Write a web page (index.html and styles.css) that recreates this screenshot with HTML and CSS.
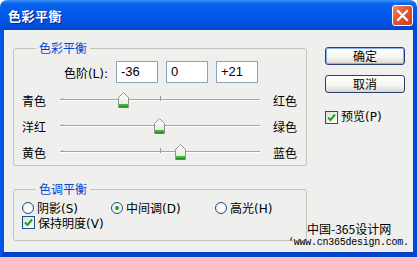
FILE: index.html
```html
<!doctype html>
<html lang="zh-cn">
	<head>
		<meta charset="utf-8">
		<title>色彩平衡</title>
		<link rel="stylesheet" href="styles.css">
	</head>
	<body>
		<div class="window">
			<div class="titlebar">
				<span class="title">色彩平衡</span>
				<span class="close">
					<svg width="13" height="13" viewBox="0 0 13 13"><path d="M2 2 L11 11 M11 2 L2 11" stroke="#fff" stroke-width="2.2" stroke-linecap="square"/></svg>
				</span>
			</div>

			<div class="frame">
				<div class="main">
					<fieldset class="group balance">
						<legend>色彩平衡</legend>
						<div class="levels">
							<span class="levels-label">色阶(L):</span>
							<span class="field">-36</span>
							<span class="field">0</span>
							<span class="field">+21</span>
						</div>

						<div class="sliders">
							<div class="slider-row">
								<span class="from">青色</span>
								<div class="track">
									<span class="tick start"></span>
									<span class="tick mid"></span>
									<svg class="thumb" style="left: 58px" width="11" height="16" viewBox="0 0 11 16"><use href="#thumb"/></svg>
								</div>
								<span class="to">红色</span>
							</div>
							<div class="slider-row">
								<span class="from">洋红</span>
								<div class="track">
									<span class="tick start"></span>
									<span class="tick mid"></span>
									<svg class="thumb" style="left: 94px" width="11" height="16" viewBox="0 0 11 16"><use href="#thumb"/></svg>
								</div>
								<span class="to">绿色</span>
							</div>
							<div class="slider-row">
								<span class="from">黄色</span>
								<div class="track">
									<span class="tick start"></span>
									<span class="tick mid"></span>
									<svg class="thumb" style="left: 115px" width="11" height="16" viewBox="0 0 11 16"><use href="#thumb"/></svg>
								</div>
								<span class="to">蓝色</span>
							</div>
						</div>
					</fieldset>

					<fieldset class="group tone">
						<legend>色调平衡</legend>
						<div class="tone-grid">
							<label class="option"><span class="radio"></span>阴影(S)</label>
							<label class="option"><span class="radio on"></span>中间调(D)</label>
							<label class="option"><span class="radio"></span>高光(H)</label>
							<label class="option keep"><span class="check"><svg width="9" height="9" viewBox="0 0 9 9"><path d="M1 4.5 L3.5 7 L8 1.5" fill="none" stroke="#21a121" stroke-width="2"/></svg></span>保持明度(V)</label>
						</div>
					</fieldset>
				</div>

				<div class="side">
					<span class="button default">确定</span>
					<span class="button">取消</span>
					<label class="option preview"><span class="check"><svg width="9" height="9" viewBox="0 0 9 9"><path d="M1 4.5 L3.5 7 L8 1.5" fill="none" stroke="#21a121" stroke-width="2"/></svg></span>预览(P)</label>
				</div>
			</div>

			<div class="watermark">
				<div class="wm-name">中国-365设计网</div>
				<div class="wm-url">‘www.cn365design.com.</div>
			</div>
		</div>

		<svg width="0" height="0" class="defs">
			<defs>
				<linearGradient id="thumbfill" x1="0" y1="0" x2="0" y2="1">
					<stop offset="0" stop-color="#ffffff"/>
					<stop offset="1" stop-color="#e4e4dc"/>
				</linearGradient>
				<g id="thumb">
					<path d="M0.5 5.5 L5.5 0.5 L10.5 5.5 L10.5 15.5 L0.5 15.5 Z" fill="url(#thumbfill)" stroke="#8c9a8c"/>
					<rect x="1" y="12" width="9" height="2" fill="#3cba3c"/>
					<rect x="1" y="14" width="9" height="1.5" fill="#1f8a1f"/>
				</g>
			</defs>
		</svg>
	</body>
</html>
```

FILE: styles.css
```css
body {
	margin: 0;
	font-family: "DejaVu Sans", "Noto Sans CJK SC", sans-serif;
	font-size: 12px;
	color: #000;
}

.defs { position: absolute; }

.window {
	position: relative;
	width: 417px;
	height: 257px;
	display: flex;
	flex-direction: column;
	overflow: hidden;
}

/* title bar */
.titlebar {
	height: 30px;
	flex: none;
	display: flex;
	align-items: center;
	justify-content: space-between;
	padding: 0 4px 0 8px;
	border-radius: 7px 7px 0 0;
	background: linear-gradient(to bottom, #3d95ff 0%, #0a63ea 12%, #0058ee 45%, #0055e5 70%, #0047d0 100%);
	box-sizing: border-box;
}

.title {
	color: #fff;
	font-family: "Noto Sans CJK SC", sans-serif;
	font-weight: bold;
	font-size: 13px;
	letter-spacing: 0.5px;
	text-shadow: 1px 1px #0a1e8a;
}

.close {
	width: 19px;
	height: 19px;
	border: 1px solid #fff;
	border-radius: 3px;
	background: linear-gradient(135deg, #f08a6a 0%, #e2552f 45%, #c7411d 100%);
	display: flex;
	align-items: center;
	justify-content: center;
}

/* dialog body */
.frame {
	flex: 1;
	display: flex;
	background: #efefed;
	border-left: 4px solid #0055e5;
	border-right: 4px solid #0048d8;
	border-bottom: 5px solid #0043c8;
}

.main {
	width: 294px;
	padding: 10px 0 0 9px;
}

.group {
	margin: 0;
	padding: 0 0 0 8px;
	border: 1px solid #c4c4bc;
	border-radius: 3px;
	min-width: 0;
	box-sizing: border-box;
}

.group legend {
	margin-left: 14px;
	padding: 0 3px;
	line-height: 16px;
	color: #0046d5;
	font-family: "Noto Sans CJK SC", sans-serif;
	font-size: 12px;
}

.balance { height: 126px; }

.levels {
	display: flex;
	align-items: center;
	gap: 8px;
	margin-top: 5px;
	height: 22px;
}

.levels-label {
	width: 86px;
	text-align: right;
}

.field {
	width: 42px;
	height: 22px;
	box-sizing: border-box;
	border: 1px solid #8ea4bb;
	background: #fff;
	padding: 0 4px;
	font-family: "Liberation Sans", sans-serif;
	font-size: 13px;
	line-height: 20px;
}

.sliders { margin-top: 4px; }

.slider-row {
	display: flex;
	align-items: center;
	height: 26px;
}

.from { width: 38px; }
.to { margin-left: 13px; }

.track {
	position: relative;
	width: 200px;
	height: 0;
	border-top: 1px solid #a6a69e;
	border-bottom: 1px solid #fff;
}

.tick {
	position: absolute;
	width: 1px;
	background: #9a9a92;
}
.tick.start { left: 2px; top: -2px; height: 2px; }
.tick.mid { left: 100px; top: -4px; height: 5px; }

.thumb {
	position: absolute;
	top: -8px;
	display: block;
}

.tone {
	margin-top: 15px;
	height: 60px;
}

.tone-grid {
	display: grid;
	grid-template-columns: 89px 104px auto;
	grid-auto-rows: 15px;
	margin-top: 3px;
}

.option {
	display: flex;
	align-items: center;
	gap: 3px;
	white-space: nowrap;
}

.keep { grid-column: 1 / 4; }

.radio {
	width: 10px;
	height: 10px;
	border: 1px solid #1c5180;
	border-radius: 50%;
	background: radial-gradient(circle at 60% 60%, #fff 0%, #ecebe6 100%);
	display: flex;
	align-items: center;
	justify-content: center;
	flex: none;
}

.radio.on::after {
	content: "";
	width: 4px;
	height: 4px;
	border-radius: 50%;
	background: #21a121;
}

.check {
	width: 11px;
	height: 11px;
	border: 1px solid #1c5180;
	background: linear-gradient(135deg, #e0e0da, #fff);
	display: flex;
	align-items: center;
	justify-content: center;
	flex: none;
}

/* buttons column */
.side {
	display: flex;
	flex-direction: column;
	padding: 17px 0 0 18px;
}

.button {
	width: 80px;
	height: 18px;
	box-sizing: border-box;
	border: 1px solid #2b3f6c;
	border-radius: 3px;
	background: linear-gradient(to bottom, #ffffff 0%, #f4f4f0 60%, #d8d8d0 100%);
	text-align: center;
	line-height: 16px;
	font-family: "Noto Sans CJK SC", sans-serif;
}

.button.default {
	box-shadow: inset 0 0 0 1px #8fb0f0;
}

.button + .button { margin-top: 10px; }

.preview {
	margin-top: 18px;
	line-height: 13px;
	height: 13px;
}

/* watermark pasted over the corner of the shot */
.watermark {
	position: absolute;
	left: 288px;
	top: 221px;
	line-height: 15px;
}

.wm-name {
	padding-left: 19px;
	font-family: "Noto Sans CJK SC", sans-serif;
	font-size: 12px;
}

.wm-url {
	font-family: "Liberation Mono", monospace;
	font-size: 10px;
	letter-spacing: -0.25px;
	line-height: 12px;
	margin-top: 1px;
}
```
